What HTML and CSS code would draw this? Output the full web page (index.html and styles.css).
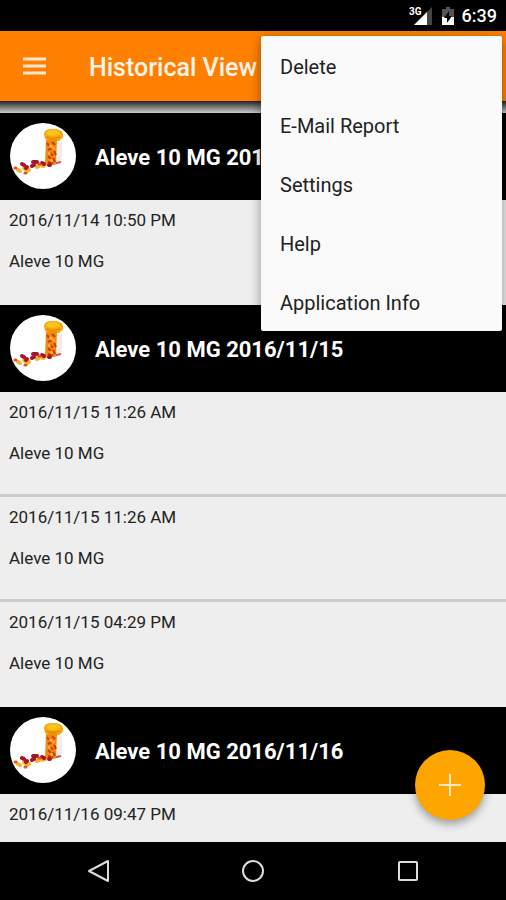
FILE: index.html
```
<!DOCTYPE html>
<html lang="en">

<head>
    <meta charset="utf-8">
    <meta name="viewport" content="width=device-width, initial-scale=1">
    <title>Historical View</title>
    <link rel="stylesheet" href="styles.css">
</head>

<body>
    <!-- pill bottle picture, shared by all group headers -->
    <svg class="defs" width="0" height="0" aria-hidden="true">
        <symbol id="pills" viewBox="0 0 66 66">
            <circle cx="33" cy="33" r="33" fill="#fff" />
            <path d="M47 19h5v20l-5 2z" fill="#ededf2" />
            <path d="M38 42l13-3" stroke="#e8503a" stroke-width="2" />
            <path d="M36 17h11l-1 24q-5 2-11 0z" fill="#f08a10" />
            <path d="M37 20l2 3M42 19l3 3M38 27l4-2M44 28l2 4M38 33l3 3M43 35l2 4M38 39l5 1M41 30l2 3" stroke="#d4380c" stroke-width="2" />
            <path d="M40 22l2 3M38 30l2 1M43 24l1 2M41 36l1 3" stroke="#ffc02a" stroke-width="2" />
            <path d="M34 11q0-5 9-5t10 5q1 4-4 7h-12q-3-3-3-7z" fill="#f7a80a" />
            <ellipse cx="43" cy="10" rx="7" ry="3" fill="#fbc21c" />
            <path d="M36 14q7 3 14 0M38 17h9" fill="none" stroke="#dd7c06" stroke-width="1" />
            <g fill="none" stroke-width="4" stroke-linecap="round">
                <path d="M8 47l2 1M14 45l1 1M17 48l2-1M27 44l2-1M33 43l2-1" stroke="#f5b52a" />
                <path d="M12 41l2 1M23 39l4 0M22 43l2-1M16 45l1-1M32 40l2 1M39 42h1" stroke="#a8142e" />
                <path d="M5 45l1 0M15 50l1 0M29 41l1 0" stroke="#e2541e" stroke-width="3" />
            </g>
        </symbol>
    </svg>

    <div class="status-bar">
        <span class="network">3G</span>
        <svg class="signal" width="18" height="18" viewBox="0 0 18 18" aria-hidden="true">
            <path d="M18 0v18H0z" fill="#444" />
            <path d="M13 5v13H0z" fill="#fff" />
        </svg>
        <svg class="battery" width="12" height="18" viewBox="0 0 12 18" aria-hidden="true">
            <path d="M4 0h4v2h4v16H0V2h4z" fill="#555" />
            <path d="M0 10h12v8H0z" fill="#fff" />
            <path d="M7 4l-5 7h3v5l5-7H7z" fill="#000" />
        </svg>
        <span class="clock">6:39</span>
    </div>

    <header class="app-bar">
        <button type="button" class="menu-btn" aria-label="Open navigation">
            <svg width="24" height="18" viewBox="0 0 24 18">
                <path d="M1 2h23M1 9h23M1 16h23" stroke="#ffe8d2" stroke-width="3" />
            </svg>
        </button>
        <h1>Historical View</h1>
        <div class="popup" role="menu">
            <button type="button" role="menuitem">Delete</button>
            <button type="button" role="menuitem">E-Mail Report</button>
            <button type="button" role="menuitem">Settings</button>
            <button type="button" role="menuitem">Help</button>
            <button type="button" role="menuitem">Application Info</button>
        </div>
    </header>

    <main>
        <div class="history">
            <section>
                <h2><svg class="avatar" aria-hidden="true"><use href="#pills" /></svg><span>Aleve 10 MG 2016/11/14</span></h2>
                <ul>
                    <li>
                        <p>2016/11/14 10:50 PM</p>
                        <p>Aleve 10 MG</p>
                    </li>
                </ul>
            </section>
            <section>
                <h2><svg class="avatar" aria-hidden="true"><use href="#pills" /></svg><span>Aleve 10 MG 2016/11/15</span></h2>
                <ul>
                    <li>
                        <p>2016/11/15 11:26 AM</p>
                        <p>Aleve 10 MG</p>
                    </li>
                    <li>
                        <p>2016/11/15 11:26 AM</p>
                        <p>Aleve 10 MG</p>
                    </li>
                    <li>
                        <p>2016/11/15 04:29 PM</p>
                        <p>Aleve 10 MG</p>
                    </li>
                </ul>
            </section>
            <section>
                <h2><svg class="avatar" aria-hidden="true"><use href="#pills" /></svg><span>Aleve 10 MG 2016/11/16</span></h2>
                <ul>
                    <li>
                        <p>2016/11/16 09:47 PM</p>
                    </li>
                </ul>
            </section>
        </div>
        <button type="button" class="fab" aria-label="Add">
            <svg width="22" height="22" viewBox="0 0 22 22">
                <path d="M11 0v22M0 11h22" stroke="#ffe9c4" stroke-width="2" />
            </svg>
        </button>
    </main>

    <nav class="nav-bar">
        <button type="button" aria-label="Back">
            <svg width="24" height="24" viewBox="0 0 24 24">
                <path d="M22 2v20L3 12z" />
            </svg>
        </button>
        <button type="button" aria-label="Home">
            <svg width="24" height="24" viewBox="0 0 24 24">
                <circle cx="12" cy="12" r="10" />
            </svg>
        </button>
        <button type="button" aria-label="Recent apps">
            <svg width="24" height="24" viewBox="0 0 24 24">
                <rect x="3" y="3" width="18" height="18" rx="1" />
            </svg>
        </button>
    </nav>
</body>

</html>
```
FILE: styles.css
```
* {
    box-sizing: border-box;
}

body {
    display: flex;
    flex-direction: column;
    height: 100vh;
    margin: 0;
    font-family: Roboto, "Liberation Sans", sans-serif;
    color: #222;
    background-color: #000;
}

h1,
h2,
p,
ul {
    margin: 0;
    padding: 0;
}

button {
    border: none;
    padding: 0;
    background: none;
    font: inherit;
    color: inherit;
    cursor: pointer;
}

svg {
    display: block;
    flex-shrink: 0;
}

.defs {
    position: absolute;
}

.status-bar {
    display: flex;
    align-items: center;
    justify-content: flex-end;
    flex-shrink: 0;
    height: 31px;
    padding-right: 9px;
    color: #fff;
}

/* sits over the empty corner of the signal triangle */
.network {
    align-self: flex-start;
    margin: 6px -8px 0 0;
    font-size: 10px;
    font-weight: 700;
    line-height: 12px;
    z-index: 1;
}

.battery {
    margin: 0 8px 0 10px;
}

.clock {
    font-size: 18px;
    font-weight: 500;
}

.app-bar {
    position: relative;
    z-index: 2;
    display: flex;
    align-items: center;
    flex-shrink: 0;
    height: 70px;
    padding: 0 22px;
    background-color: #ff8000;
    color: #fff5ea;
}

.menu-btn {
    padding: 8px 0;
}

h1 {
    margin-left: 43px;
    padding-top: 2px;
    font-size: 25px;
    font-weight: 500;
}

/* overflow menu */
.popup {
    position: absolute;
    top: 5px;
    right: 4px;
    display: flex;
    flex-direction: column;
    width: 241px;
    border-radius: 2px;
    background-color: #fafafa;
    color: #222;
    box-shadow: 0 3px 12px rgba(0, 0, 0, 0.4);
}

.popup button {
    height: 59px;
    padding: 3px 19px 0;
    font-size: 20px;
    text-align: left;
}

main {
    position: relative;
    flex: 1;
    min-height: 0;
}

.history {
    height: 100%;
    overflow: hidden;
    background-color: #eee;
}

.history::before {
    content: "";
    display: block;
    height: 12px;
    background: linear-gradient(#222, #ccc);
}

h2 {
    display: flex;
    align-items: center;
    gap: 19px;
    height: 87px;
    padding: 0 10px 1px;
    font-size: 22px;
    font-weight: 700;
    line-height: 28px;
    white-space: nowrap;
    color: #fff;
    background-color: #000;
}

h2 span {
    padding-top: 3px;
}

.avatar {
    width: 66px;
    height: 66px;
}

ul {
    list-style: none;
}

li {
    height: 105px;
    padding: 8px 9px;
    font-size: 17px;
    line-height: 24px;
}

li:not(:last-child) {
    border-bottom: 3px solid #ccc;
}

li p + p {
    margin-top: 17px;
}

.fab {
    position: absolute;
    right: 21px;
    bottom: 22px;
    display: flex;
    align-items: center;
    justify-content: center;
    width: 70px;
    height: 70px;
    border-radius: 50%;
    background-color: #ffa500;
    box-shadow: 0 4px 8px rgba(0, 0, 0, 0.35);
}

.nav-bar {
    display: flex;
    justify-content: center;
    gap: 131px;
    flex-shrink: 0;
    height: 58px;
    background-color: #000;
}

.nav-bar svg {
    fill: none;
    stroke: #ddd;
    stroke-width: 2;
    stroke-linejoin: round;
}
```
